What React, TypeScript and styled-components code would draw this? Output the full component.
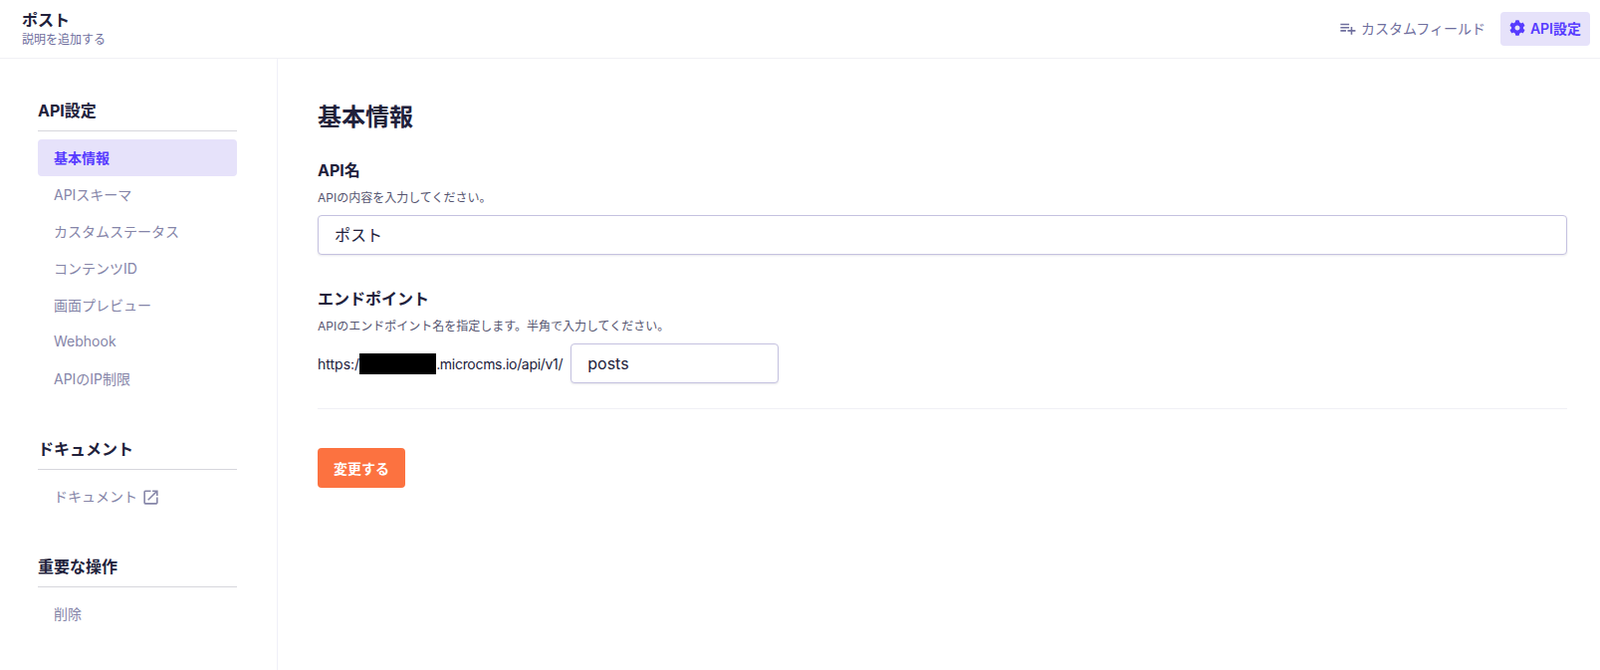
import styled, { createGlobalStyle } from 'styled-components';
import { MdPlaylistAdd, MdOpenInNew } from 'react-icons/md';
import { FaCog } from 'react-icons/fa';

const navGroups = [
    { title: 'API設定', items: ['基本情報', 'APIスキーマ', 'カスタムステータス', 'コンテンツID', '画面プレビュー', 'Webhook', 'APIのIP制限'] },
    { title: 'ドキュメント', items: ['ドキュメント'], external: true },
    { title: '重要な操作', items: ['削除'] },
];

export default function App() {
    return (
        <>
            <GlobalStyle />
            <Page>
                <TopBar>
                    <TitleBlock>
                        <PageTitle>ポスト</PageTitle>
                        <PageSubtitle>説明を追加する</PageSubtitle>
                    </TitleBlock>
                    <TopActions>
                        <TopButton>
                            <MdPlaylistAdd size={19} />
                            カスタムフィールド
                        </TopButton>
                        <TopButton $active>
                            <FaCog size={16} />
                            API設定
                        </TopButton>
                    </TopActions>
                </TopBar>
                <Body>
                    <Sidebar>
                        {navGroups.map((group) => (
                            <NavGroup key={group.title}>
                                <NavTitle>{group.title}</NavTitle>
                                <NavList>
                                    {group.items.map((item) => (
                                        <NavItem key={item} $active={item === '基本情報'}>
                                            {item}
                                            {group.external && <MdOpenInNew size={19} />}
                                        </NavItem>
                                    ))}
                                </NavList>
                            </NavGroup>
                        ))}
                    </Sidebar>
                    <Main>
                        <Heading>基本情報</Heading>
                        <Fields>
                            <Field>
                                <FieldLabel>API名</FieldLabel>
                                <FieldHint>APIの内容を入力してください。</FieldHint>
                                <NameInput defaultValue="ポスト" />
                            </Field>
                            <Field>
                                <FieldLabel>エンドポイント</FieldLabel>
                                <FieldHint>APIのエンドポイント名を指定します。半角で入力してください。</FieldHint>
                                <EndpointRow>
                                    <EndpointText>
                                        https:/<Redacted /><EndpointHost>.microcms.io/api/v1/</EndpointHost>
                                    </EndpointText>
                                    <EndpointInput defaultValue="posts" />
                                </EndpointRow>
                            </Field>
                        </Fields>
                        <Divider />
                        <SubmitButton>変更する</SubmitButton>
                    </Main>
                </Body>
            </Page>
        </>
    );
}

const GlobalStyle = createGlobalStyle`
    html, body {
        margin: 0;
        padding: 0;
        background: #fff;
    }
    body {
        font-family: Inter, "Noto Sans CJK JP", sans-serif;
        color: #21213b;
    }
    * {
        box-sizing: border-box;
    }
`;

const Page = styled.div`
    display: flex;
    flex-direction: column;
    height: 673px;
    overflow: hidden;
`;

const TopBar = styled.header`
    display: flex;
    align-items: center;
    justify-content: space-between;
    height: 59px;
    flex-shrink: 0;
    padding: 0 10px 0 22px;
    border-bottom: 1px solid #f0f0f5;
`;

const TitleBlock = styled.div`
    display: flex;
    flex-direction: column;
`;

const PageTitle = styled.div`
    font-size: 16px;
    font-weight: 700;
    line-height: 22px;
`;

const PageSubtitle = styled.div`
    font-size: 12px;
    line-height: 18px;
    color: #6f6f9e;
`;

const TopActions = styled.div`
    display: flex;
    align-items: center;
    gap: 6px;
`;

const TopButton = styled.button<{ $active?: boolean }>`
    display: flex;
    align-items: center;
    gap: ${({ $active }) => ($active ? '5px' : '4px')};
    height: 34px;
    padding: 0 9px 2px;
    border: 0;
    border-radius: 4px;
    font-family: inherit;
    font-size: 14px;
    font-weight: ${({ $active }) => ($active ? 600 : 400)};
    color: ${({ $active }) => ($active ? '#563bff' : '#6f6f9e')};
    background: ${({ $active }) => ($active ? '#e6e2fa' : 'transparent')};
`;

const Body = styled.div`
    display: flex;
    flex: 1;
    min-height: 0;
`;

const Sidebar = styled.aside`
    display: flex;
    flex-direction: column;
    gap: 40px;
    width: 279px;
    flex-shrink: 0;
    padding: 40px 40px 0 38px;
    border-right: 1px solid #f0f0f8;
`;

const NavGroup = styled.nav`
    display: flex;
    flex-direction: column;
`;

const NavTitle = styled.h3`
    margin: 0 0 8px;
    padding-bottom: 8px;
    font-size: 16px;
    font-weight: 700;
    line-height: 24px;
    border-bottom: 1px solid #d6d6dc;
`;

const NavList = styled.div`
    display: flex;
    flex-direction: column;
`;

const NavItem = styled.a<{ $active?: boolean }>`
    display: flex;
    align-items: center;
    gap: 4px;
    height: 37px;
    padding: 0 16px 2px;
    border-radius: 4px;
    font-size: 14px;
    font-weight: ${({ $active }) => ($active ? 700 : 400)};
    color: ${({ $active }) => ($active ? '#563bff' : '#8585a8')};
    background: ${({ $active }) => ($active ? '#e6e2fa' : 'transparent')};

    svg {
        margin-top: 3px;
    }
`;

const Main = styled.main`
    flex: 1;
    min-width: 0;
    padding: 41px 33px 0 40px;
`;

const Heading = styled.h1`
    margin: 0 0 23px;
    font-size: 24px;
    font-weight: 700;
    line-height: 36px;
`;

const Fields = styled.div`
    display: flex;
    flex-direction: column;
    gap: 32px;
    margin-bottom: 25px;
`;

const Field = styled.section``;

const FieldLabel = styled.label`
    display: block;
    font-size: 16px;
    font-weight: 700;
    line-height: 24px;
`;

const FieldHint = styled.p`
    margin: 7px 0 8px;
    font-size: 12px;
    line-height: 18px;
    color: #55556f;
`;

const TextInput = styled.input`
    display: block;
    width: 100%;
    height: 40px;
    padding: 0 16px;
    border: 1px solid #c5c2e0;
    border-radius: 4px;
    font-family: inherit;
    font-size: 16px;
    color: #21213b;
    box-shadow: 0 1px 2px rgba(33, 33, 59, 0.1);
    outline: none;
`;

const NameInput = styled(TextInput)`
    padding-bottom: 3px;
`;

const EndpointRow = styled.div`
    display: flex;
    align-items: center;
    gap: 8px;
`;

const EndpointText = styled.span`
    display: flex;
    align-items: center;
    font-size: 14px;
    white-space: nowrap;
`;

const EndpointHost = styled.span`
    letter-spacing: -0.3px;
`;

const Redacted = styled.span`
    display: inline-block;
    width: 77px;
    height: 21px;
    background: #000;
`;

const EndpointInput = styled(TextInput)`
    width: 209px;
`;

const Divider = styled.hr`
    margin: 0 0 39px;
    border: 0;
    border-top: 1px solid #f0f0f5;
`;

const SubmitButton = styled.button`
    display: block;
    width: 88px;
    height: 40px;
    border: 0;
    border-radius: 4px;
    font-family: inherit;
    font-size: 14px;
    font-weight: 700;
    color: #fff;
    background: #fc7240;
`;
